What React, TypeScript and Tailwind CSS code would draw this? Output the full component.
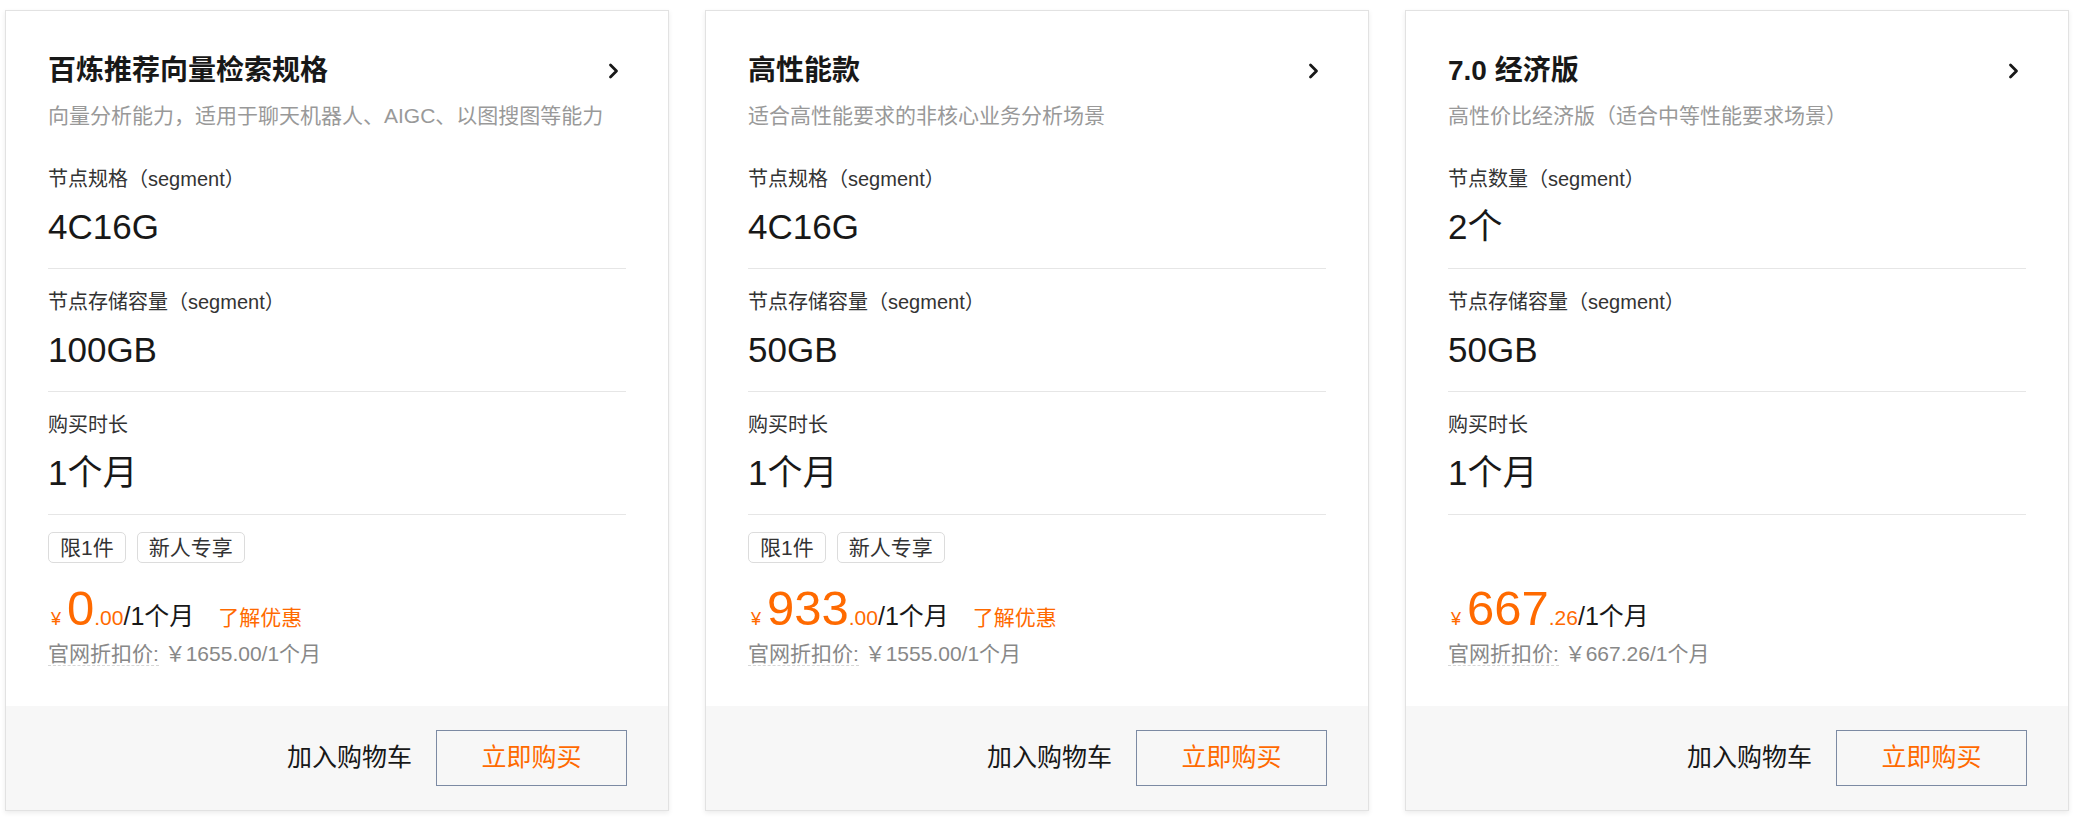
import React from "react";

type Spec = { label: string; value: string };
type Plan = {
  title: string;
  desc: string;
  specs: Spec[];
  tags: string[];
  intPart: string;
  decPart: string;
  promo: boolean;
  original: string;
};

const plans: Plan[] = [
  {
    title: "百炼推荐向量检索规格",
    desc: "向量分析能力，适用于聊天机器人、AIGC、以图搜图等能力",
    specs: [
      { label: "节点规格（segment）", value: "4C16G" },
      { label: "节点存储容量（segment）", value: "100GB" },
      { label: "购买时长", value: "1个月" },
    ],
    tags: ["限1件", "新人专享"],
    intPart: "0",
    decPart: ".00",
    promo: true,
    original: "￥1655.00/1个月",
  },
  {
    title: "高性能款",
    desc: "适合高性能要求的非核心业务分析场景",
    specs: [
      { label: "节点规格（segment）", value: "4C16G" },
      { label: "节点存储容量（segment）", value: "50GB" },
      { label: "购买时长", value: "1个月" },
    ],
    tags: ["限1件", "新人专享"],
    intPart: "933",
    decPart: ".00",
    promo: true,
    original: "￥1555.00/1个月",
  },
  {
    title: "7.0 经济版",
    desc: "高性价比经济版（适合中等性能要求场景）",
    specs: [
      { label: "节点数量（segment）", value: "2个" },
      { label: "节点存储容量（segment）", value: "50GB" },
      { label: "购买时长", value: "1个月" },
    ],
    tags: [],
    intPart: "667",
    decPart: ".26",
    promo: false,
    original: "￥667.26/1个月",
  },
];

function Chevron() {
  return (
    <svg width="12" height="16" viewBox="0 0 12 16" fill="none" className="shrink-0">
      <path d="M2.5 2 L8.5 8 L2.5 14" stroke="#181818" strokeWidth="2.8" strokeLinecap="round" strokeLinejoin="round" />
    </svg>
  );
}

function Card({ plan }: { plan: Plan }) {
  return (
    <div className="w-[664px] h-[801px] shrink-0 flex flex-col bg-white border border-[#e2e2e2] shadow-[0_2px_5px_rgba(0,0,0,0.08)]">
      <div className="flex-1 flex flex-col px-[42px] pt-[40px]">
        <div className="flex items-center justify-between h-[40px]">
          <div className="text-[28px] leading-[40px] font-bold text-[#181818]">{plan.title}</div>
          <div className="pr-[6px]">
            <Chevron />
          </div>
        </div>
        <div className="mt-[10px] text-[21px] leading-[30px] text-[#999999] whitespace-nowrap">{plan.desc}</div>
        <div className="mt-[34px] flex flex-col">
          {plan.specs.map((s, i) => (
            <div
              key={i}
              className={
                "flex flex-col border-b border-[#e6e6e6] pb-[19px] " + (i === 0 ? "pt-0" : "pt-[19px]")
              }
            >
              <div className="text-[20px] leading-[28px] text-[#333333]">{s.label}</div>
              <div className="mt-[12px] text-[35px] leading-[44px] text-[#181818]">{s.value}</div>
            </div>
          ))}
        </div>
        <div className="mt-[17px] h-[31px] flex gap-[11px]">
          {plan.tags.map((t) => (
            <div
              key={t}
              className="h-[31px] px-[11px] flex items-center rounded-[5px] border border-[#dcdcdc] text-[21px] leading-none text-[#333333]"
            >
              {t}
            </div>
          ))}
        </div>
        <div className="mt-[21px] h-[48px] flex items-baseline whitespace-nowrap">
          <span className="text-[18px] text-[#ff6a00] mr-[6px] ml-[3px]">¥</span>
          <span className="text-[49px] leading-[48px] text-[#ff6a00]">{plan.intPart}</span>
          <span className="text-[21px] text-[#ff6a00]">{plan.decPart}</span>
          <span className="text-[25px] text-[#181818]">/1个月</span>
          {plan.promo && <span className="ml-[24px] text-[21px] text-[#ff6a00]">了解优惠</span>}
        </div>
        <div className="mt-[8px] text-[21px] leading-[28px] text-[#888888] whitespace-nowrap">
          <span className="border-b border-dashed border-[#d6d6d6]">官网折扣价:</span>
          <span> {plan.original}</span>
        </div>
      </div>
      <div className="h-[104px] bg-[#f7f7f7] flex items-center justify-end pr-[41px]">
        <span className="text-[25px] text-[#181818]">加入购物车</span>
        <button className="ml-[24px] w-[191px] h-[56px] border border-[#7c8aa3] bg-transparent text-[25px] text-[#ff6a00] flex items-center justify-center">
          立即购买
        </button>
      </div>
    </div>
  );
}

export default function App() {
  return (
    <div className="w-[2082px] h-[831px] bg-white pl-[5px] pt-[10px] flex gap-[36px] font-['Liberation_Sans','Noto_Sans_CJK_SC',sans-serif]">
      {plans.map((p) => (
        <Card key={p.title} plan={p} />
      ))}
    </div>
  );
}
